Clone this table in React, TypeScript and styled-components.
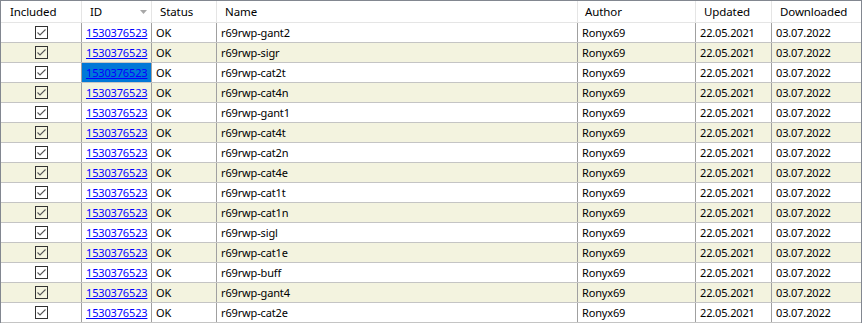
import styled, { createGlobalStyle } from "styled-components";

const GlobalStyle = createGlobalStyle`
  html, body {
    margin: 0;
    padding: 0;
    background: #fff;
  }
  body {
    font-family: "Noto Sans", "Open Sans", sans-serif;
    font-size: 11px;
    color: #000;
  }
`;

const COLUMNS = "81px 70px 65px 361px 118px 76px 89px";

const Frame = styled.div`
  width: 862px;
  box-sizing: border-box;
  border: 1px solid #828790;
  background: #fff;
`;

const HeaderRow = styled.div`
  display: grid;
  grid-template-columns: ${COLUMNS};
  height: 22px;
  box-sizing: border-box;
  border-bottom: 1px solid #e5e5e5;
`;

const HeaderCell = styled.div<{ $pad?: number; $last?: boolean }>`
  display: flex;
  align-items: center;
  justify-content: space-between;
  box-sizing: border-box;
  padding-left: ${p => p.$pad ?? 8}px;
  padding-right: 4px;
  padding-bottom: 1px;
  border-right: ${p => (p.$last ? "none" : "1px solid #e5e5e5")};
  font-size: 11.5px;
  letter-spacing: -0.1px;
  white-space: nowrap;
`;

const SortArrow = styled.svg`
  width: 7px;
  height: 4px;
  margin-top: 1px;
`;

const Row = styled.div<{ $alt: boolean }>`
  display: grid;
  grid-template-columns: ${COLUMNS};
  height: 20px;
  box-sizing: border-box;
  border-bottom: 1px solid #c4c4c4;
  background: ${p => (p.$alt ? "#f3f3df" : "#fff")};
`;

const Cell = styled.div<{ $center?: boolean; $selected?: boolean; $last?: boolean }>`
  display: flex;
  align-items: center;
  justify-content: ${p => (p.$center ? "center" : "flex-start")};
  box-sizing: border-box;
  padding-left: ${p => (p.$center ? 0 : 4)}px;
  border-right: ${p => (p.$last ? "none" : "1px solid #a0a0a0")};
  background: ${p => (p.$selected ? "#0078d7" : "transparent")};
  white-space: nowrap;
  overflow: hidden;
  font-size: 11px;
  letter-spacing: -0.15px;
`;

const IdLink = styled.a`
  color: #0000ff;
  text-decoration: underline;
  cursor: pointer;
`;

const CheckBox = styled.svg`
  width: 13px;
  height: 13px;
  display: block;
`;

function Check() {
  return (
    <CheckBox viewBox="0 0 13 13">
      <rect x="0.5" y="0.5" width="12" height="12" fill="none" stroke="#333" />
      <polyline points="2.5,6.5 5,9 10.5,3.5" fill="none" stroke="#555" strokeWidth="1.1" />
    </CheckBox>
  );
}

const names = [
  "gant2", "sigr", "cat2t", "cat4n", "gant1", "cat4t", "cat2n", "cat4e",
  "cat1t", "cat1n", "sigl", "cat1e", "buff", "gant4", "cat2e",
];

export default function App() {
  return (
    <>
      <GlobalStyle />
      <Frame>
        <HeaderRow>
          <HeaderCell $pad={9}>Included</HeaderCell>
          <HeaderCell>
            ID
            <SortArrow viewBox="0 0 7 4">
              <polygon points="0,0 7,0 3.5,4" fill="#a8a8a8" />
            </SortArrow>
          </HeaderCell>
          <HeaderCell>Status</HeaderCell>
          <HeaderCell>Name</HeaderCell>
          <HeaderCell $pad={7}>Author</HeaderCell>
          <HeaderCell>Updated</HeaderCell>
          <HeaderCell $last>Downloaded</HeaderCell>
        </HeaderRow>
        {names.map((n, i) => (
          <Row key={n} $alt={i % 2 === 1}>
            <Cell $center>
              <Check />
            </Cell>
            <Cell $selected={i === 2}>
              <IdLink>1530376523</IdLink>
            </Cell>
            <Cell>OK</Cell>
            <Cell>r69rwp-{n}</Cell>
            <Cell>Ronyx69</Cell>
            <Cell>22.05.2021</Cell>
            <Cell $last>03.07.2022</Cell>
          </Row>
        ))}
      </Frame>
    </>
  );
}
